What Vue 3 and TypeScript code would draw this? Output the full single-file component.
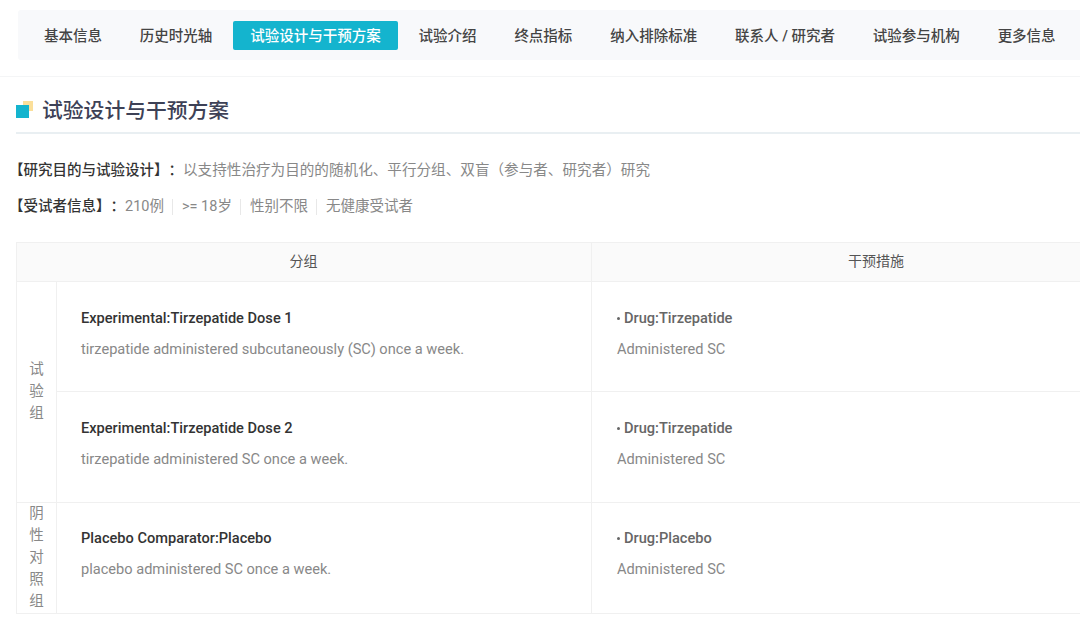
<script setup lang="ts">
const tabs = ['基本信息','历史时光轴','试验设计与干预方案','试验介绍','终点指标','纳入排除标准','联系人 / 研究者','试验参与机构','更多信息']
const activeTab = '试验设计与干预方案'
const subjects = ['210例','>= 18岁','性别不限','无健康受试者']
const rows = [
  { group: '试验组', span: 2, name: 'Experimental:Tirzepatide Dose 1', desc: 'tirzepatide administered subcutaneously (SC) once a week.', drug: 'Drug:Tirzepatide', h: 110 },
  { group: '', span: 0, name: 'Experimental:Tirzepatide Dose 2', desc: 'tirzepatide administered SC once a week.', drug: 'Drug:Tirzepatide', h: 111 },
  { group: '阴性对照组', span: 1, name: 'Placebo Comparator:Placebo', desc: 'placebo administered SC once a week.', drug: 'Drug:Placebo', h: 108 },
]
</script>

<template>
  <div class="page">
    <nav class="tabs">
      <span v-for="t in tabs" :key="t" class="tab" :class="{ active: t === activeTab }">{{ t }}</span>
    </nav>
    <div class="rule"></div>
    <section class="section">
      <h2 class="title">
        <span class="mark"><i class="back"></i><i class="front"></i></span>
        试验设计与干预方案
      </h2>
      <p class="line first"><b>【研究目的与试验设计】：</b><span class="val">以支持性治疗为目的的随机化、平行分组、双盲（参与者、研究者）研究</span></p>
      <p class="line second"><b>【受试者信息】：</b><span v-for="s in subjects" :key="s" class="val item">{{ s }}</span></p>
      <table class="grid">
        <colgroup><col class="c1" /><col class="c2" /><col class="c3" /></colgroup>
        <thead>
          <tr><th colspan="2">分组</th><th>干预措施</th></tr>
        </thead>
        <tbody>
          <tr v-for="r in rows" :key="r.name" :style="{ height: r.h + 'px' }">
            <td v-if="r.span" :rowspan="r.span" class="group"><div>{{ r.group }}</div></td>
            <td class="cell">
              <div class="name">{{ r.name }}</div>
              <div class="desc">{{ r.desc }}</div>
            </td>
            <td class="cell">
              <div class="drug"><span class="dot"></span>{{ r.drug }}</div>
              <div class="desc">Administered SC</div>
            </td>
          </tr>
        </tbody>
      </table>
    </section>
  </div>
</template>

<style>
html, body { margin: 0; background: #fff; overflow: hidden; }
</style>

<style scoped>
.page {
  width: 1080px;
  height: 620px;
  overflow: hidden;
  background: #fff;
  font-family: Roboto, "Noto Sans CJK SC", sans-serif;
  font-size: 14.5px;
  color: #888;
  padding-top: 10px;
  box-sizing: border-box;
}
.tabs {
  margin-left: 18px;
  width: 1062px;
  height: 50px;
  box-sizing: border-box;
  padding-left: 9px;
  background: #f8f9fb;
  display: flex;
  align-items: center;
  gap: 3.85px;
  white-space: nowrap;
  border-radius: 3px 0 0 3px;
}
.tab {
  height: 29px;
  line-height: 31px;
  padding: 0 17px;
  color: #444;
  font-weight: 500;
  border-radius: 2px;
}
.tab.active { background: #14b4ce; color: #fff; }
.rule { height: 1px; margin-top: 16px; background: #f4f5f6; }
.section { margin-left: 16px; width: 1100px; }
.title {
  margin: 0;
  height: 47px;
  padding-top: 8px;
  display: flex;
  align-items: center;
  gap: 9px;
  font-size: 20.8px;
  font-weight: 500;
  color: #3d4156;
  border-bottom: 2px solid #e9eff2;
  box-sizing: content-box;
}
.mark { position: relative; width: 17px; height: 18px; flex: none; margin-top: 2px; }
.mark i { position: absolute; display: block; }
.back { left: 7px; top: 0; width: 10px; height: 10px; background: #fbdf9a; }
.front { left: 0; top: 4px; width: 13px; height: 13px; background: #14b4ce; }
.line { margin: 0; height: 22px; line-height: 22px; white-space: nowrap; text-spacing-trim: space-all; }
.line.first { margin-top: 25px; }
.line.second { margin-top: 15px; }
.line b { font-weight: 500; color: #333; margin-left: -7px; }
.val { color: #888; margin-left: 0; font-size: 14.6px; }
.item { padding-right: 8px; margin-left: 0; border-right: 1px solid #e8e8e8; margin-right: 9px; display: inline-block; line-height: 16px; font-size: 14.5px; }
.line b + .item { margin-left: 0; }
.item:last-child { border-right: 0; }
.grid {
  margin-top: 24px;
  width: 1100px;
  table-layout: fixed;
  border-collapse: collapse;
  border: 1px solid #f0f0f0;
}
.c1 { width: 40px; }
.c2 { width: 535px; }
.grid th, .grid td { border: 1px solid #f0f0f0; padding: 0; }
.grid th {
  height: 33px;
  padding-bottom: 5px;
  background: #fafafa;
  font-weight: 400;
  color: #555;
  font-size: 14px;
  text-align: center;
}
.grid th:first-child { padding-right: 1px; }
.grid th:last-child { text-align: left; padding-left: 256px; }
.group { text-align: center; color: #888; font-size: 14.5px; line-height: 22px; vertical-align: middle; }
.group div { width: 16px; margin: 0 auto; word-break: break-all; }
.cell { padding: 0 0 0 24px !important; vertical-align: top; }
.cell + .cell { padding-left: 25px !important; }
.name, .drug { margin-top: 25px; line-height: 22px; font-weight: 500; color: #333; font-size: 14.6px; }
.drug { color: #666; }
tr:last-child .name, tr:last-child .drug { margin-top: 24px; }
.dot { display: inline-block; width: 3px; height: 3px; border-radius: 50%; background: #666; margin-right: 4px; vertical-align: 3px; }
.desc { margin-top: 9px; line-height: 22px; font-size: 14.6px; color: #888; }
</style>
